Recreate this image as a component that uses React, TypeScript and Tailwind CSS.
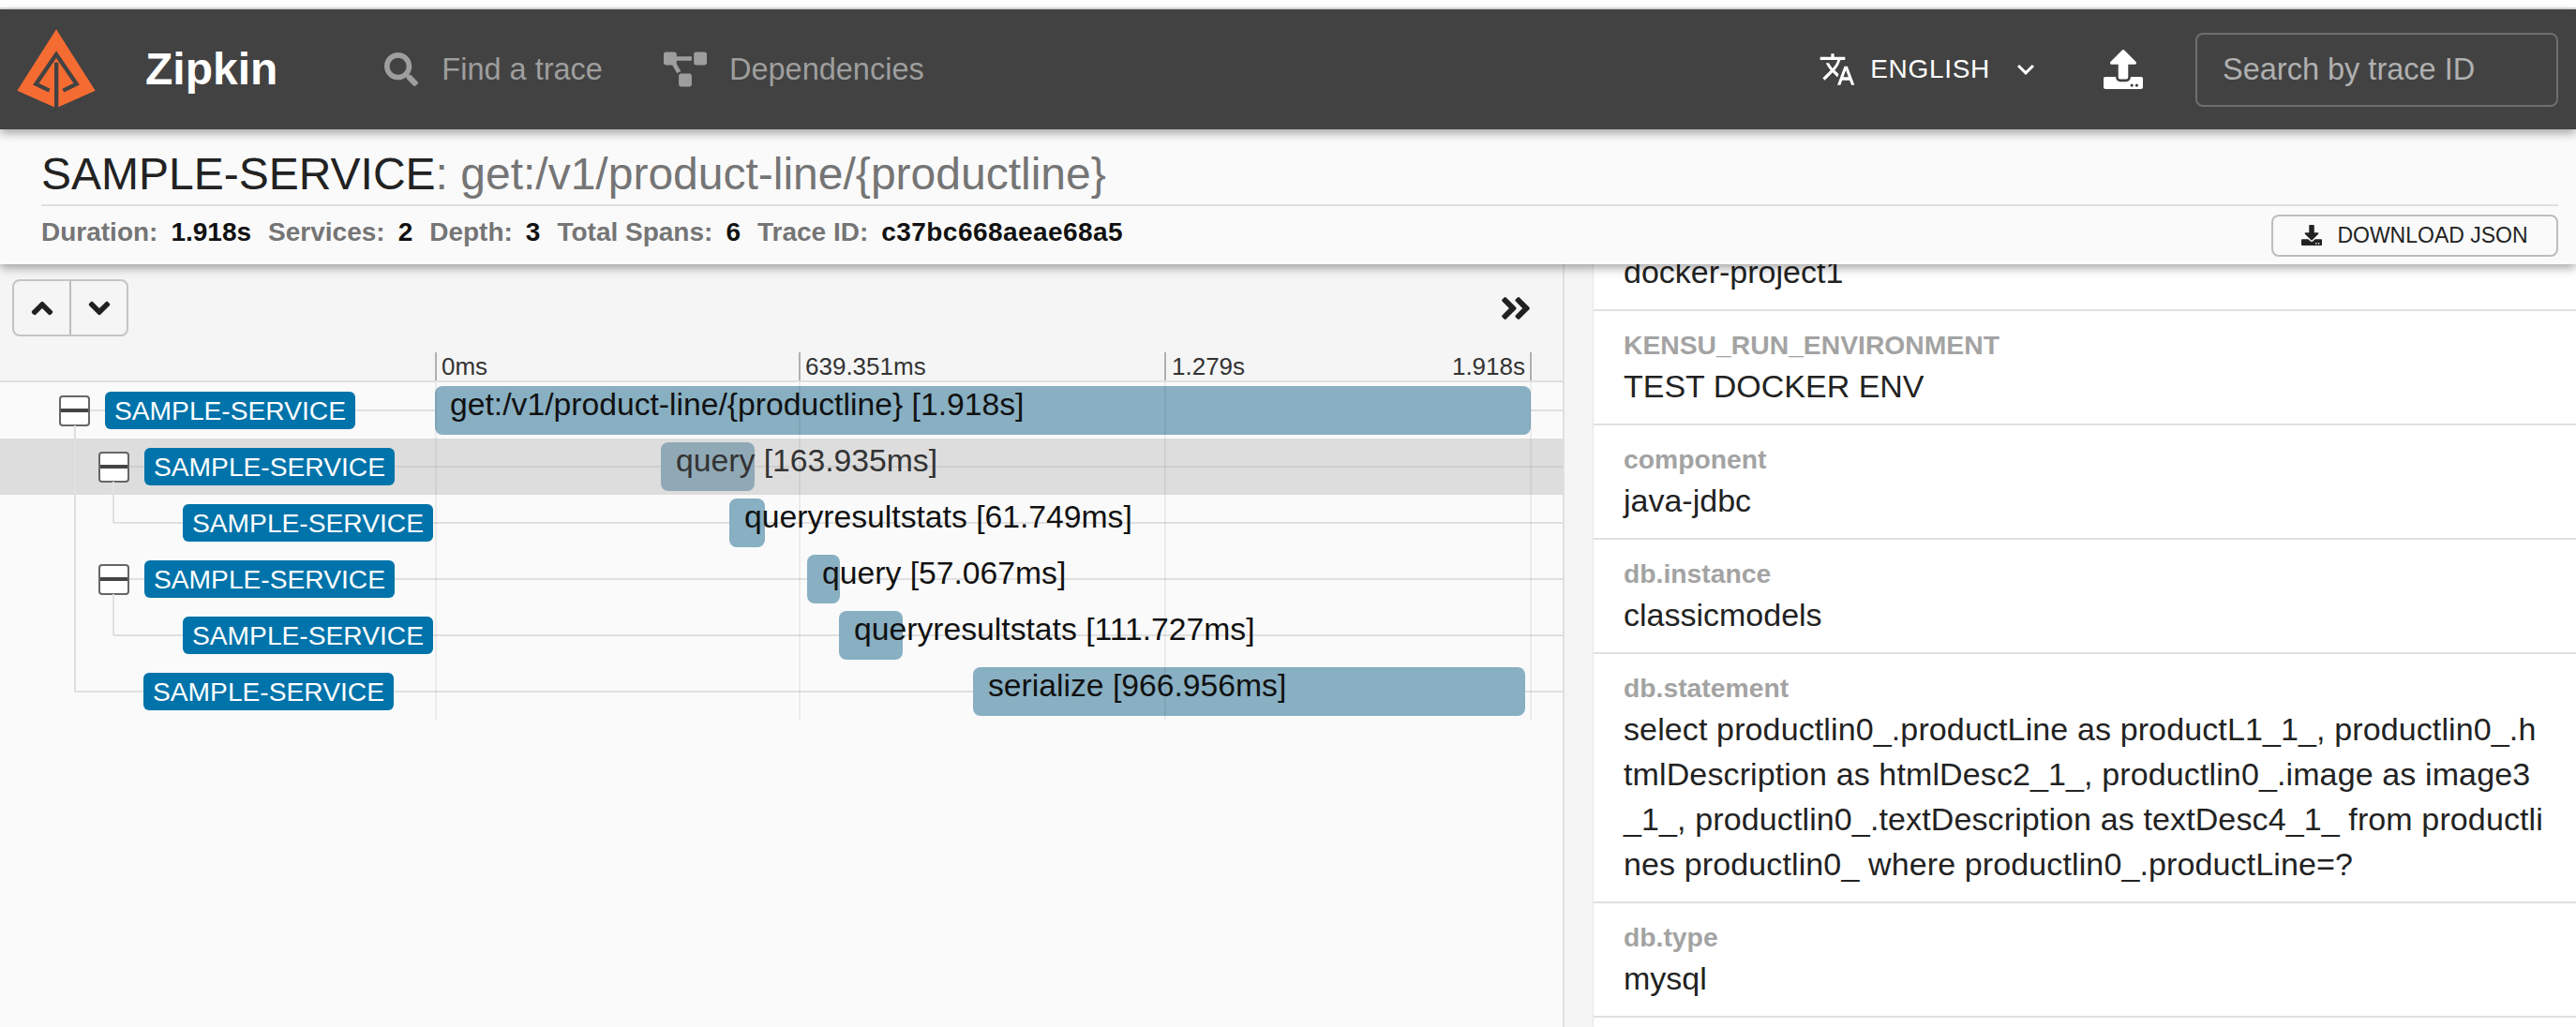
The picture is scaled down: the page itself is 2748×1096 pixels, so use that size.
import React from "react";
import { FaSearch, FaProjectDiagram, FaUpload, FaDownload, FaAngleUp, FaAngleDown, FaAngleDoubleRight } from "react-icons/fa";
import { MdTranslate, MdExpandMore } from "react-icons/md";

type Row = {
  pad: string;
  toggle: boolean;
  line: string;
  start: number;
  width: number;
  label: string;
  selected?: boolean;
};

const rows: Row[] = [
  { pad: "pl-[63px]", toggle: true, line: "left-[96px]", start: 0, width: 1169, label: "get:/v1/product-line/{productline} [1.918s]" },
  { pad: "pl-[105px]", toggle: true, line: "left-[138px]", start: 241, width: 100, label: "query [163.935ms]", selected: true },
  { pad: "pl-[195px]", toggle: false, line: "left-[121px]", start: 314, width: 38, label: "queryresultstats [61.749ms]" },
  { pad: "pl-[105px]", toggle: true, line: "left-[138px]", start: 397, width: 35, label: "query [57.067ms]" },
  { pad: "pl-[195px]", toggle: false, line: "left-[121px]", start: 431, width: 68, label: "queryresultstats [111.727ms]" },
  { pad: "pl-[153px]", toggle: false, line: "left-[80px]", start: 574, width: 589, label: "serialize [966.956ms]" },
];

const tags = [
  { k: "KENSU_RUN_ENVIRONMENT", v: "TEST DOCKER ENV", c: "" },
  { k: "component", v: "java-jdbc", c: "" },
  { k: "db.instance", v: "classicmodels", c: "" },
  {
    k: "db.statement",
    v: "select productlin0_.productLine as productL1_1_, productlin0_.h\ntmlDescription as htmlDesc2_1_, productlin0_.image as image3\n_1_, productlin0_.textDescription as textDesc4_1_ from productli\nnes productlin0_ where productlin0_.productLine=?",
    c: "whitespace-pre-line tracking-[0.12px]",
  },
  { k: "db.type", v: "mysql", c: "" },
];

function Logo() {
  return (
    <svg viewBox="0 0 300 300" className="w-[100px] h-[100px] shrink-0 ml-[10px]">
      <polygon points="150,22 275,218 150,274 25,218" fill="#f56c33" />
      <polyline points="128,218 85,197 150,102 215,197 172,218" fill="none" stroke="#424242" strokeWidth="13" />
      <rect x="144" y="128" width="13" height="150" fill="#424242" />
    </svg>
  );
}

function Meta({ k, v, c = "" }: { k: string; v: string; c?: string }) {
  return (
    <div className="flex mr-[18px]">
      <span className="text-[#757575]">{k}</span>
      <span className={`ml-[14px] text-[#111] ${c}`}>{v}</span>
    </div>
  );
}

function Toggle() {
  return (
    <div className="w-[33px] h-[33px] mr-[16px] shrink-0 rounded-[4px] border-2 border-[#666] bg-white flex items-center">
      <div className="w-full h-[4px] bg-[#444]" />
    </div>
  );
}

function Badge() {
  return (
    <div className="relative w-[267px] h-[40px] shrink-0 rounded-[6px] bg-[#0073aa] text-white text-[28.2px] leading-[40px] text-center">
      SAMPLE-SERVICE
    </div>
  );
}

function TraceRow({ row }: { row: Row }) {
  return (
    <div className={`relative h-[60px] flex ${row.selected ? "bg-[#dddddd]" : ""}`}>
      <div className={`absolute right-0 top-[29px] h-[2px] ${row.line} ${row.selected ? "bg-[#cfcfcf]" : "bg-[#e0e0e0]"}`} />
      <div className={`relative w-[464px] shrink-0 flex items-center ${row.pad}`}>
        {row.toggle && <Toggle />}
        <Badge />
      </div>
      <div className="relative flex-1 pt-[4px]">
        <div
          className={`h-[52px] rounded-[8px] pl-[16px] whitespace-nowrap text-[33.7px] leading-[38px] ${
            row.selected ? "bg-[#90a9b6] text-[#333]" : "bg-[#88afc2] text-[#111]"
          }`}
          style={{ marginLeft: row.start, width: row.width }}
        >
          {row.label}
        </div>
      </div>
    </div>
  );
}

export default function App() {
  return (
    <div className="w-[2748px] h-[1096px] overflow-hidden flex flex-col bg-[#fafafa] font-['Liberation_Sans',Arial,sans-serif]">
      <div className="h-[10px] shrink-0 bg-white border-b-2 border-[#e0e0e0]" />

      <header className="relative z-20 h-[128px] shrink-0 bg-[#424242] flex items-center shadow-[0_4px_10px_rgba(0,0,0,0.35)]">
        <Logo />
        <span className="ml-[45px] text-white font-bold text-[48px]">Zipkin</span>
        <FaSearch className="ml-[114px] text-[#9e9e9e] text-[36px]" />
        <span className="ml-[25px] text-[#9e9e9e] text-[32.5px]">Find a trace</span>
        <FaProjectDiagram className="ml-[65px] text-[#9e9e9e] text-[46px]" />
        <span className="ml-[24px] text-[#9e9e9e] text-[32.5px]">Dependencies</span>
        <div className="ml-auto flex items-center">
          <MdTranslate className="text-white text-[40px]" />
          <span className="ml-[15px] text-white text-[28px] tracking-[0.7px]">ENGLISH</span>
          <MdExpandMore className="ml-[20px] text-white text-[36px]" />
          <FaUpload className="ml-[65px] text-white text-[42px]" />
          <input
            placeholder="Search by trace ID"
            className="ml-[56px] mr-[19px] w-[387px] h-[79px] rounded-[8px] border-2 border-[#6e6e6e] bg-transparent pl-[27px] text-[32.5px] text-white placeholder:text-[#b0b0b0] placeholder:opacity-100 outline-none"
          />
        </div>
      </header>

      <section className="relative z-10 h-[144px] shrink-0 bg-[#fafafa] pl-[44px] pr-[19px] shadow-[0_4px_10px_rgba(0,0,0,0.35)]">
        <div className="h-[82px] border-b-2 border-[#e0e0e0] text-[48px] leading-[54px] pt-[21px]">
          <span className="text-[#222]">SAMPLE-SERVICE</span>
          <span className="text-[#757575]">: get:/v1/product-line/{"{productline}"}</span>
        </div>
        <div className="h-[62px] flex items-center justify-between">
          <div className="flex font-bold text-[28px] leading-[36px] -mt-[6px]">
            <Meta k="Duration:" v="1.918s" />
            <Meta k="Services:" v="2" />
            <Meta k="Depth:" v="3" />
            <Meta k="Total Spans:" v="6" />
            <Meta k="Trace ID:" v="c37bc668aeae68a5" c="tracking-[0.45px]" />
          </div>
          <button className="w-[306px] h-[45px] rounded-[8px] border-2 border-[#bdbdbd] flex items-center justify-center text-[23px] text-[#222]">
            <FaDownload className="text-[22px] mr-[16px]" />
            DOWNLOAD JSON
          </button>
        </div>
      </section>

      <main className="flex-1 min-h-0 flex bg-[#f5f5f5]">
        <div className="w-[1669px] shrink-0 border-r-2 border-[#e0e0e0] flex flex-col">
          <div className="h-[126px] shrink-0 bg-[#f5f5f5] border-b-2 border-[#e0e0e0] flex flex-col">
            <div className="pl-[13px] pr-[31px] pt-[16px] flex items-center justify-between">
              <div className="w-[124px] h-[61px] rounded-[8px] border-2 border-[#c4c4c4] flex">
                <div className="w-[61px] border-r-2 border-[#bdbdbd] flex items-center justify-center text-[#212121] text-[36px]">
                  <FaAngleUp />
                </div>
                <div className="flex-1 flex items-center justify-center text-[#212121] text-[36px]">
                  <FaAngleDown />
                </div>
              </div>
              <FaAngleDoubleRight className="text-[#212121] text-[38px]" />
            </div>
            <div className="mt-[17px] h-[30px] pl-[464px] flex text-[26px] leading-[30px] text-[#333]">
              <div className="w-[388px] border-l-2 border-[#b0b0b0] pl-[5px]">0ms</div>
              <div className="w-[390px] border-l-2 border-[#b0b0b0] pl-[5px]">639.351ms</div>
              <div className="w-[392px] border-x-2 border-[#b0b0b0] pl-[6px] pr-[5px] flex justify-between">
                <span>1.279s</span>
                <span>1.918s</span>
              </div>
            </div>
          </div>
          <div className="relative flex-1 bg-[#fafafa]">
            {rows.map((r) => (
              <TraceRow key={r.label} row={r} />
            ))}
            {/* tree connectors */}
            <div className="absolute left-[79px] top-[46px] w-[2px] h-[285px] bg-[#e0e0e0]" />
            <div className="absolute left-[120px] top-[106px] w-[2px] h-[44px] bg-[#e0e0e0]" />
            <div className="absolute left-[120px] top-[226px] w-[2px] h-[44px] bg-[#e0e0e0]" />
            {/* time grid over the bars */}
            <div className="absolute left-[464px] top-0 w-[2px] h-[360px] bg-[rgba(0,0,0,0.06)]" />
            <div className="absolute left-[852px] top-0 w-[2px] h-[360px] bg-[rgba(0,0,0,0.06)]" />
            <div className="absolute left-[1242px] top-0 w-[2px] h-[360px] bg-[rgba(0,0,0,0.06)]" />
            <div className="absolute left-[1632px] top-0 w-[2px] h-[360px] bg-[rgba(0,0,0,0.06)]" />
          </div>
        </div>

        <aside className="ml-[30px] flex-1 min-w-0 bg-white border-l border-[#e6e6e6] overflow-hidden">
          <div className="-mt-[72px]">
            <div className="pl-[32px] pr-[20px] pt-[18px] pb-[16px] border-b-2 border-[#e0e0e0]">
              <div className="h-[36px]" />
              <div className="mt-[2px] text-[34px] leading-[48px] text-[#222]">docker-project1</div>
            </div>
            {tags.map((t) => (
              <div key={t.k} className="pl-[32px] pr-[20px] pt-[18px] pb-[16px] border-b-2 border-[#e0e0e0]">
                <div className="text-[28.3px] leading-[36px] font-bold text-[#a3a3a3]">{t.k}</div>
                <div className={`mt-[2px] text-[34px] leading-[48px] text-[#222] ${t.c}`}>{t.v}</div>
              </div>
            ))}
          </div>
        </aside>
      </main>
    </div>
  );
}
